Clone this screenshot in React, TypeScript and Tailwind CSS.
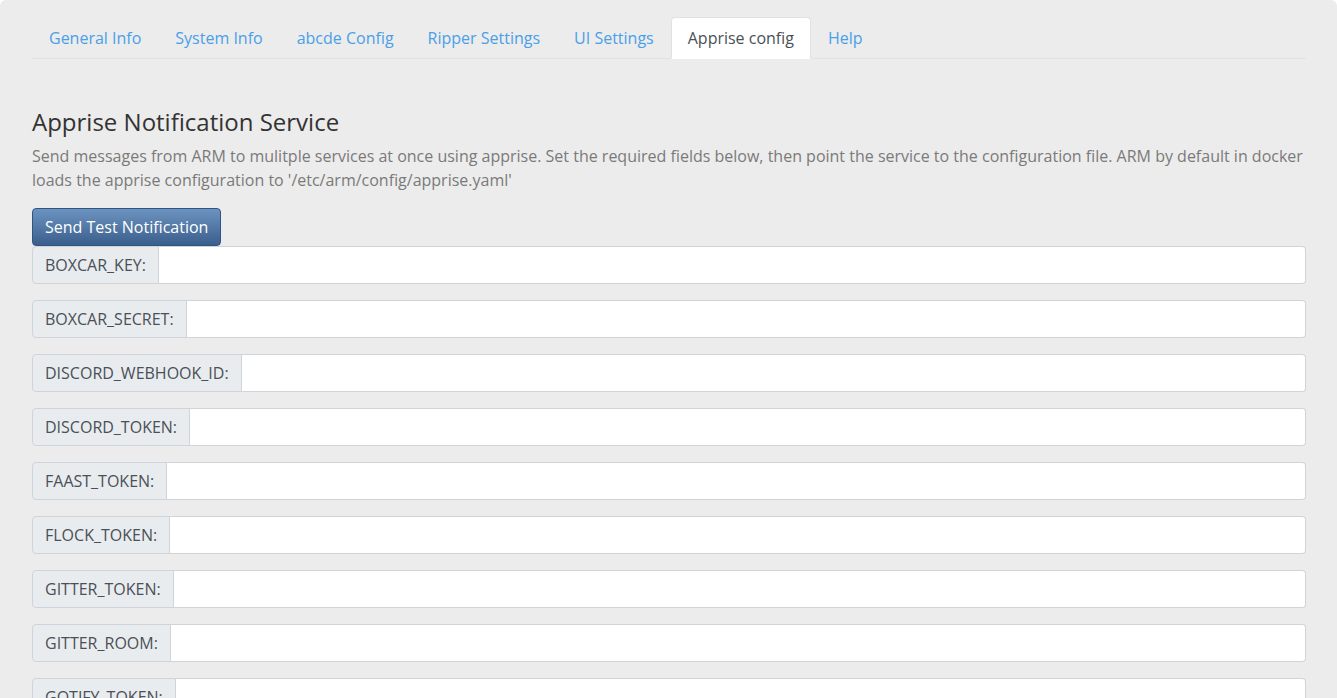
import React from "react";

const tabs = [
  "General Info",
  "System Info",
  "abcde Config",
  "Ripper Settings",
  "UI Settings",
  "Apprise config",
  "Help",
];

const fields = [
  "BOXCAR_KEY",
  "BOXCAR_SECRET",
  "DISCORD_WEBHOOK_ID",
  "DISCORD_TOKEN",
  "FAAST_TOKEN",
  "FLOCK_TOKEN",
  "GITTER_TOKEN",
  "GITTER_ROOM",
  "GOTIFY_TOKEN",
  "GOTIFY_HOST",
  "GROWL_HOST",
  "GROWL_PASS",
];

export default function App() {
  return (
    <div
      className="h-[698px] overflow-hidden bg-white"
      style={{ fontFamily: '"Open Sans", "Noto Sans", sans-serif' }}
    >
      <div className="bg-[#ececec] rounded-t-[6px] pl-8 pr-[31px] pt-[17px] pb-8 text-[16px] leading-6">
        <ul className="flex border-b border-[#dee2e6]">
          {tabs.map((t) => {
            const active = t === "Apprise config";
            return (
              <li key={t} className="-mb-px">
                <span
                  className={
                    active
                      ? "block px-4 py-2 border border-[#dee2e6] border-b-white bg-white rounded-t-[4px] text-[#495057]"
                      : "block px-4 py-2 border border-transparent text-[#4a9fe8]"
                  }
                >
                  {t}
                </span>
              </li>
            );
          })}
        </ul>
        <h4 className="mt-[48px] mb-2 text-[24px] leading-[29px] text-[#333] font-normal">
          Apprise Notification Service
        </h4>
        <p className="text-[#7a7a7a] mb-4">
          Send messages from ARM to mulitple services at once using apprise. Set the required fields below, then point the service to the configuration file. ARM by default in docker loads the apprise configuration to '/etc/arm/config/apprise.yaml'
        </p>
        <button className="h-[38px] px-3 rounded-[4px] border border-[#2f5584] text-white bg-[linear-gradient(#6c93c0,#3b5f8d)]">
          Send Test Notification
        </button>
        <div className="flex flex-col gap-4">
          {fields.map((f) => (
            <div key={f} className="flex h-[38px]">
              <span className="flex items-center px-3 bg-[#e9ecef] border border-[#ced4da] rounded-l-[4px] text-[#495057] whitespace-nowrap">
                {f}:
              </span>
              <input
                className="flex-1 min-w-0 bg-white border border-l-0 border-[#ced4da] rounded-r-[4px] px-3 outline-none"
                type="text"
              />
            </div>
          ))}
        </div>
      </div>
    </div>
  );
}
